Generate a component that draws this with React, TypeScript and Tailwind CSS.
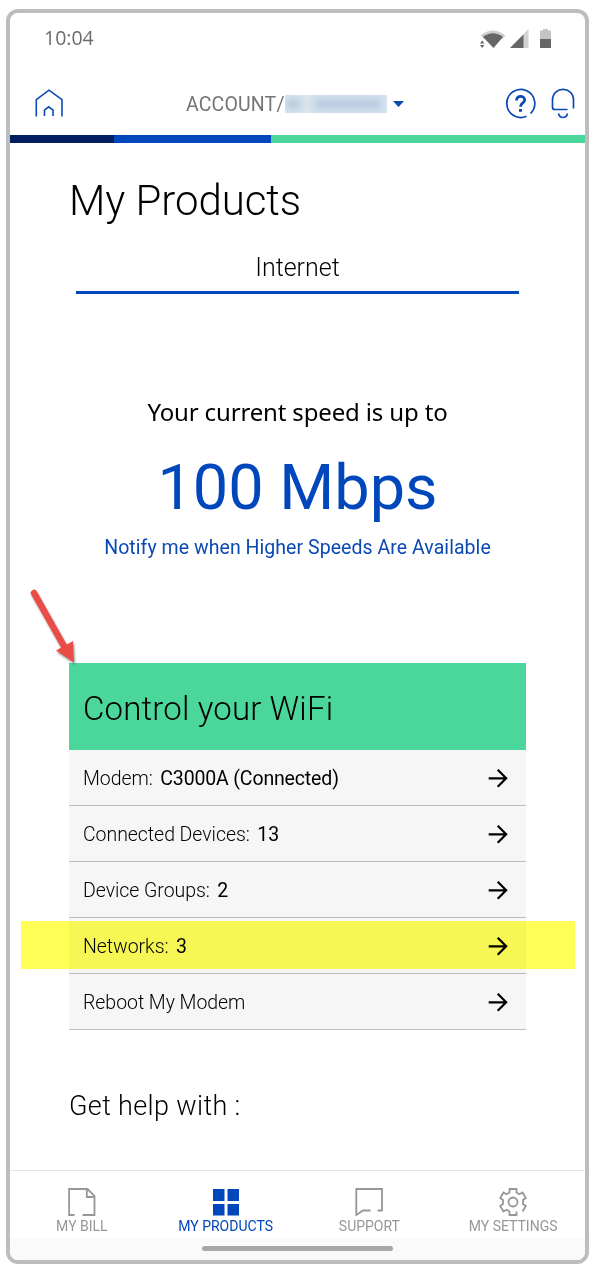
import React from "react";

interface WifiRow {
    label: string;
    value?: string;
}

const wifiRows: WifiRow[] = [
    { label: "Modem:", value: "C3000A (Connected)" },
    { label: "Connected Devices:", value: "13" },
    { label: "Device Groups:", value: "2" },
    { label: "Networks:", value: "3" },
    { label: "Reboot My Modem" },
];

const StatusBar: React.FC = () => (
    <div className="flex h-[52px] items-center justify-between pl-[34px] pr-[33px] text-[#6b6b6b]">
        <span className="pb-[2px] font-['Open_Sans',sans-serif] text-[19.5px] font-normal">10:04</span>
        <svg width="74" height="22" viewBox="0 0 74 22">
            {/* wifi */}
            <path d="M2.500 7.500Q14.500 -2.500 27.500 7.500L24 11Q15 5.500 6 11Z" fill="#cfcfcf" />
            <path d="M5 9Q15 1.500 25 9L15.500 20Z" fill="#666" />
            <path d="M2 15.500L4.200 12.500L6.400 15.500ZM2 17L4.200 20L6.400 17Z" fill="#666" />
            {/* signal */}
            <path d="M50.500 1V20H32Z" fill="#d2d2d2" />
            <path d="M45.500 6.500V20H32Z" fill="#666" />
            {/* battery */}
            <path d="M65 1H70V2.500H73V11H62V2.500H65Z" fill="#c4c4c4" />
            <path d="M62 11H73V20H62Z" fill="#666" />
        </svg>
    </div>
);

const Header: React.FC = () => (
    <div className="flex h-[70px] items-center pl-[25px] pr-[10px] pt-[6px]">
        <svg width="29" height="28" viewBox="0 0 29 28" fill="none" stroke="#0b49b3" strokeWidth="1.6">
            <path d="M1.300 27.500V10.700L14 1.200L27 10.700V27.500" />
            <path d="M9.500 27V21.200L13.700 17.800L18 21.200V27" />
        </svg>
        <div className="ml-[122px] flex items-center pt-[2px]">
            <span className="pt-[2px] text-[19.5px] tracking-[0.15px] text-[#757575]">ACCOUNT/</span>
            <div className="relative h-[18px] w-[102px] overflow-hidden bg-[#dbe5ef]">
                <div className="absolute left-0 top-1 h-[10px] w-4 rounded-full bg-[#b0c6dc] blur-[4px]" />
                <div className="absolute left-7 top-1 h-[10px] w-[70px] rounded-full bg-[#b0c6dc] blur-[5px]" />
            </div>
            <svg className="ml-[6px]" width="11" height="6" viewBox="0 0 11 6">
                <path d="M0 0H11L5.500 6Z" fill="#0b49b3" />
            </svg>
        </div>
        <div className="ml-auto flex items-center gap-[15px] text-[#0b49b3]">
            <svg width="31" height="31" viewBox="0 0 31 31" fill="none" stroke="currentColor" strokeWidth="1.7">
                <path d="M21.500 28.200A14 14 0 1 1 25.500 25.500" />
                <path d="M11.500 12.400C11.500 7 19.700 7.200 19.700 12C19.700 14.900 15.500 15 15.500 18.700" strokeWidth="2.700" />
                <path d="M14 20.900H17V23.700H14Z" fill="currentColor" stroke="none" />
            </svg>
            <svg width="24" height="31" viewBox="0 0 24 31" fill="none" stroke="currentColor" strokeWidth="1.700">
                <path d="M22.500 20.500V12C22.500 -2.200 1.500 -2.200 1.500 12V19.500Q1.500 21.500 4 21.500H16.500" />
                <path d="M7.500 25.500Q8.500 29.500 12 29.500Q15.500 29.500 16.500 25.500" />
            </svg>
        </div>
    </div>
);

const ArrowIcon: React.FC = () => (
    <svg width="20" height="20" viewBox="0 0 20 20" fill="none" stroke="#000" strokeWidth="2.200">
        <path d="M0.700 10.300H18.200M9.700 1.800L18.200 10.300L9.700 18.800" />
    </svg>
);

const WifiCard: React.FC = () => (
    <section className="mx-[59px] mt-[103px]">
        <div className="flex h-[87px] items-center bg-[#4bd79b] pl-[14px] pt-[4px]">
            <h2 className="text-[33px] font-light tracking-[0.15px]">Control your WiFi</h2>
        </div>
        {wifiRows.map((row) => (
            <div
                key={row.label}
                className="flex h-14 items-center border-b border-[#bdbdbd] bg-[#f6f6f6] pl-[14px] pr-[18px] pt-px text-[19.5px]"
            >
                <span className="pt-[2px] font-light tracking-[-0.05px]">{row.label}</span>
                {row.value && <span className="ml-[7.5px] pt-[2px] tracking-[-0.15px]">{row.value}</span>}
                <span className="ml-auto"><ArrowIcon /></span>
            </div>
        ))}
    </section>
);

const NavItem: React.FC<{ label: string; active?: boolean; children: React.ReactNode }> = ({ label, active, children }) => (
    <div className={`flex flex-col items-center pt-[17px] ${active ? "text-[#0047bb]" : "text-[#979797]"}`}>
        <svg width="28" height="28" viewBox="0 0 28 28" fill="none" stroke="currentColor" strokeWidth="1.8">
            {children}
        </svg>
        <span className="mt-[2px] text-[14px] leading-4">{label}</span>
    </div>
);

const BottomNav: React.FC = () => (
    <nav className="grid h-[68px] grid-cols-4 border-t border-[#e3e3e3]">
        <NavItem label="MY BILL">
            <path d="M6.500 27H1.100V1H19.500L26.500 8V27H14.500M18.800 1V9H26.500" />
        </NavItem>
        <NavItem label="MY PRODUCTS" active>
            <path d="M1 1H12.500V13H1ZM15.500 1H27V13H15.500ZM1 16H12.500V27.500H1ZM15.500 16H27V27.500H15.500Z" fill="currentColor" stroke="none" />
        </NavItem>
        <NavItem label="SUPPORT">
            <path d="M15.500 22.500H8L1.300 27V1H27V22.500H22.500" />
        </NavItem>
        <NavItem label="MY SETTINGS">
            <path d="M17.500 23.500V27H10.500V23.500L7.500 21.800L4.500 23.500L1.200 18L4 16V12L1.200 10L4.500 4.500L7.500 6.200L10.500 4.500V1H17.500V4.500L20.500 6.200L23.500 4.500L26.800 10L24 12V16L26.800 18L23.500 23.500" />
            <circle cx="14" cy="14" r="4.500" />
        </NavItem>
    </nav>
);

const App: React.FC = () => {
    return (
        <div className="relative h-[1268px] w-[598px] bg-white pl-[6px] pt-[9px] font-[Roboto,sans-serif] text-black">
            <div className="flex h-[1255px] w-[583px] flex-col overflow-hidden rounded-[12px] border-4 border-[#bdbdbd]">
                <StatusBar />
                <Header />
                <div className="flex h-[8px] shrink-0">
                    <div className="w-[104px] bg-[#001e60]" />
                    <div className="w-[157px] bg-[#0047bb]" />
                    <div className="flex-1 bg-[#4bd79b]" />
                </div>

                <main className="flex-1">
                    <h1 className="ml-[59px] mt-[33px] text-[42px] font-light leading-[50px] tracking-[-0.05px]">My Products</h1>
                    <div className="mx-[66px] mt-[27px] border-b-[3px] border-[#0047bb] pb-[8px] text-center text-[25px] font-light leading-[30px]">
                        Internet
                    </div>
                    <div className="flex flex-col items-center">
                        <p className="mt-[101px] font-['Noto_Sans',sans-serif] text-[24px] leading-[34px] tracking-[-0.15px]">Your current speed is up to</p>
                        <p className="mt-[22px] text-[63px] leading-[74px] text-[#0047bb]">100 Mbps</p>
                        <a className="mt-[11px] text-[19.5px] leading-6 tracking-[0.05px] text-[#0b49b3]">Notify me when Higher Speeds Are Available</a>
                    </div>
                    <WifiCard />
                    <p className="ml-[59px] mt-[60px] text-[27px] font-light leading-8 tracking-[0.35px]">Get help with :</p>
                </main>

                <BottomNav />
                <div className="flex h-[22px] shrink-0 justify-center bg-[#fafafa] pt-2">
                    <div className="h-[5px] w-[191px] rounded-full bg-[#a8a8a8]" />
                </div>
            </div>

            {/* highlighter over the Networks row */}
            <div className="absolute left-[21px] top-[921px] h-12 w-[554px] bg-[#ffff57] mix-blend-multiply" />
            {/* callout arrow */}
            <svg className="absolute left-[24px] top-[584px] drop-shadow-[1px_2px_1px_rgba(0,0,0,0.4)]" width="60" height="84" viewBox="0 0 60 84">
                <path d="M10 9L41 64" stroke="#ea4d46" strokeWidth="6.500" strokeLinecap="round" />
                <path d="M50 78.500L32 66.500L49 57Z" fill="#ea4d46" />
            </svg>
        </div>
    );
};

export default App;
